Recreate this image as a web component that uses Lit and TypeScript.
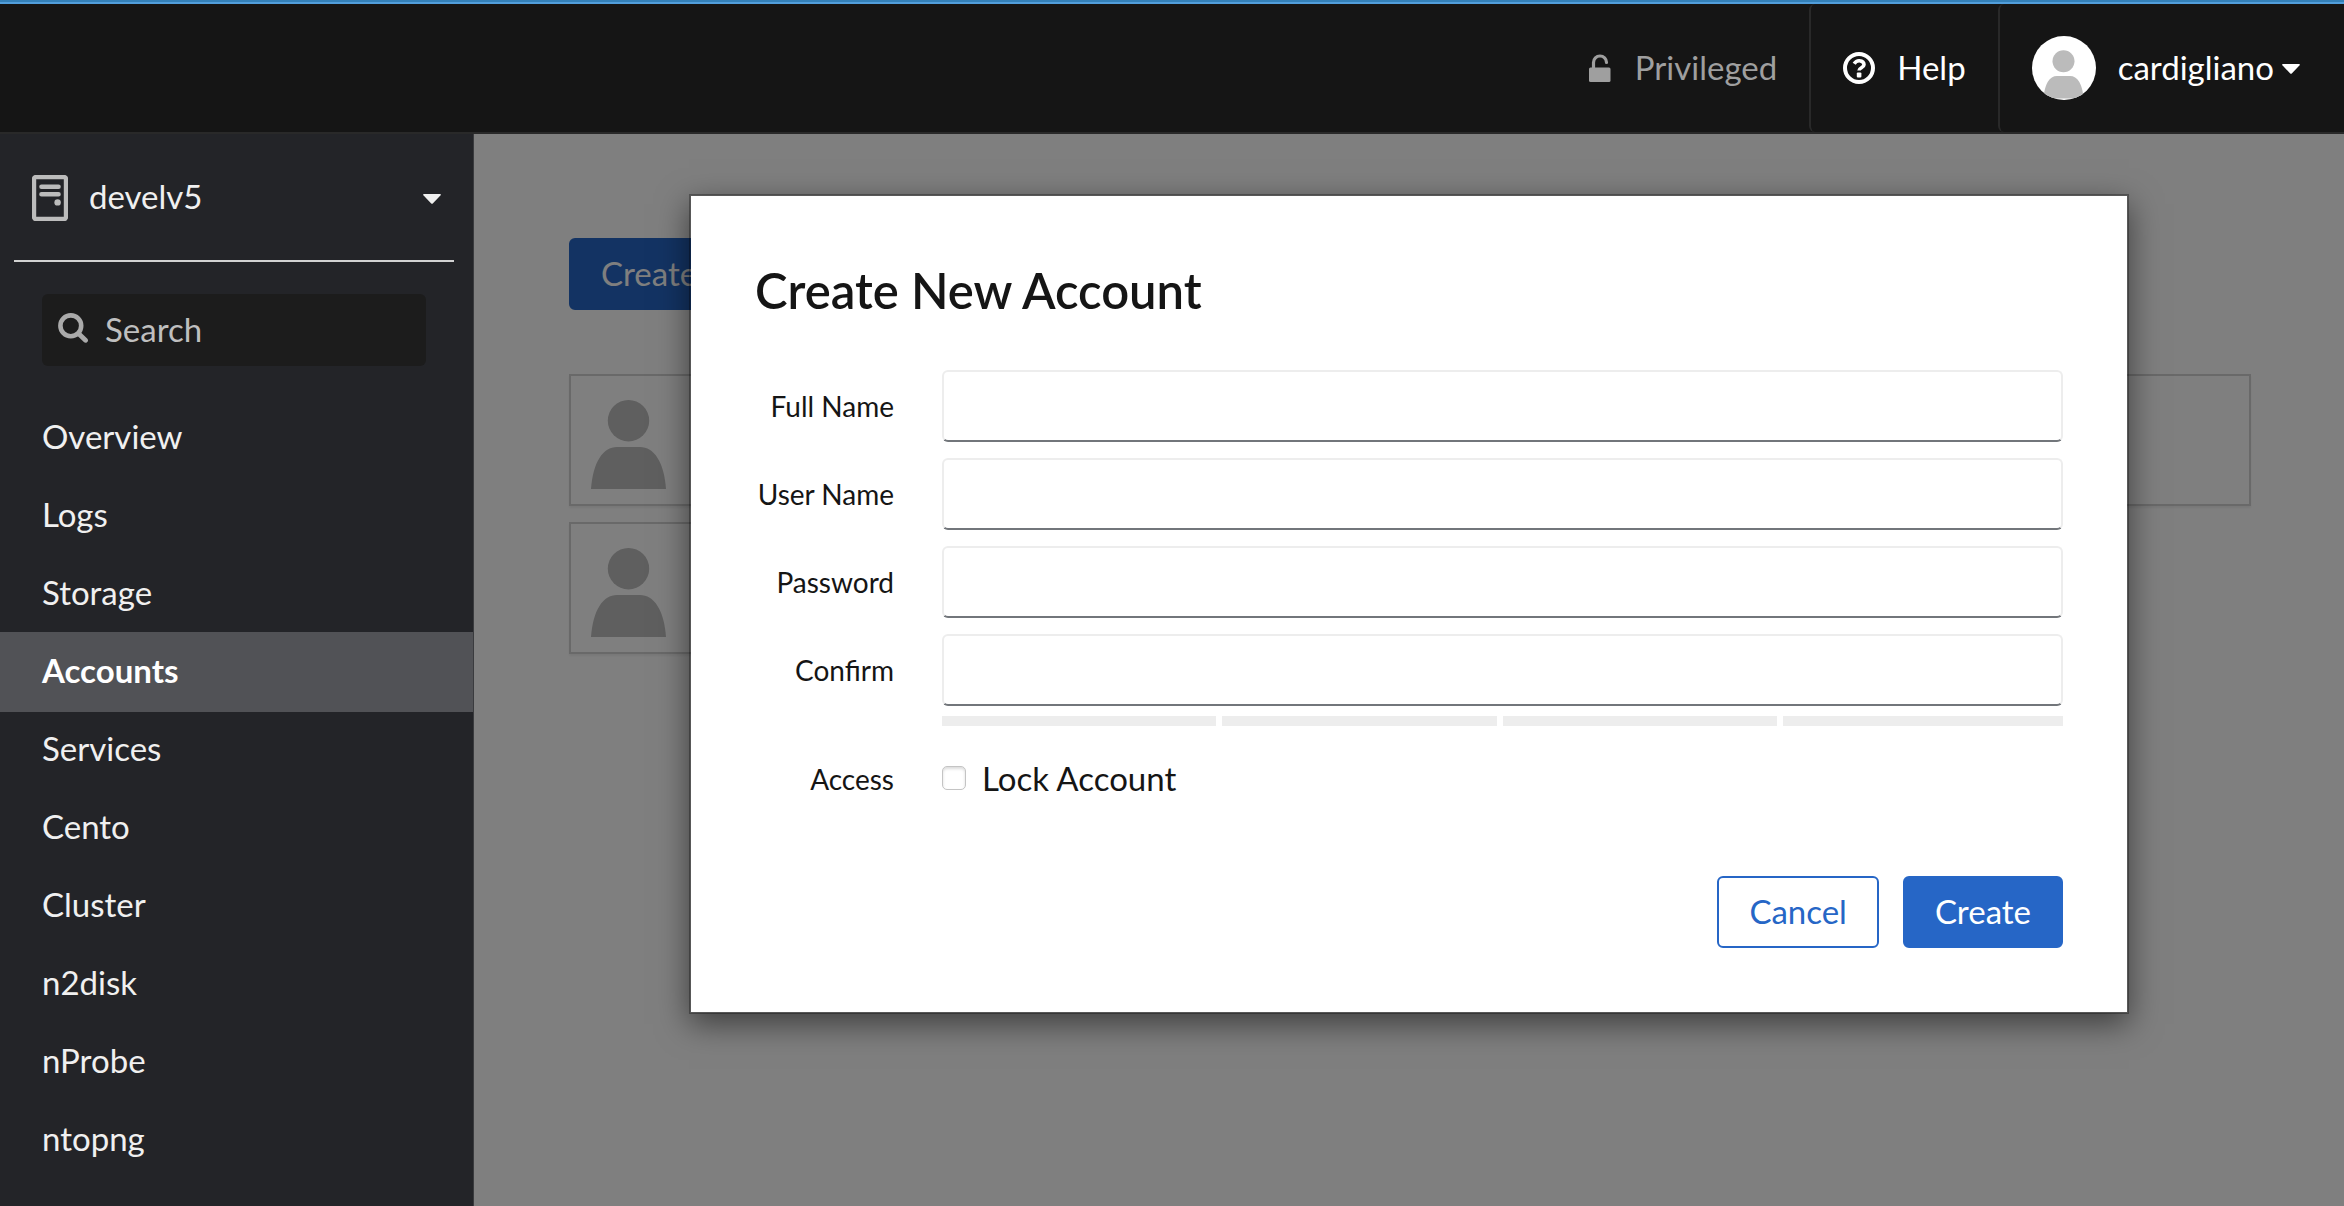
import { LitElement, html, css, svg } from "lit";
import { customElement, state } from "lit/decorators.js";
import { classMap } from "lit/directives/class-map.js";

const NAV_ITEMS = [
  "Overview",
  "Logs",
  "Storage",
  "Accounts",
  "Services",
  "Cento",
  "Cluster",
  "n2disk",
  "nProbe",
  "ntopng",
];

const FIELDS = [
  { id: "full-name", label: "Full Name", type: "text" },
  { id: "user-name", label: "User Name", type: "text" },
  { id: "password", label: "Password", type: "password" },
  { id: "confirm", label: "Confirm", type: "password" },
];

const caret = html`<svg class="caret" viewBox="0 0 18 10" aria-hidden="true">
  <path d="M1 0H17Q18.6 0.4 17.4 1.6L10 9.2Q9 10.4 8 9.2L0.6 1.6Q-0.6 0.4 1 0Z" fill="currentColor" />
</svg>`;

const personShape = svg`<circle cx="37.5" cy="20.7" r="20.7" />
  <path d="M0 89C2 62 12 47 26 47H49C63 47 73 62 75 89Z" />`;

@customElement("app-root")
export class AppRoot extends LitElement {
  static styles = css`
    :host {
      display: block;
      font-family: Lato, "Liberation Sans", sans-serif;
      font-size: 33px;
      line-height: 48px;
      color: #151515;
    }

    * {
      box-sizing: border-box;
    }

    button,
    input {
      font: inherit;
      margin: 0;
    }

    .shell {
      display: grid;
      grid-template-columns: 474px minmax(0, 1fr);
      grid-template-rows: auto 1fr;
      min-height: 100vh;
    }

    .topbar {
      grid-column: 1 / -1;
      display: flex;
      justify-content: flex-end;
      background: #151515;
      border-top: 2px solid #3480b8;
      border-bottom: 2px solid #292929;
      box-shadow: inset 0 2px #519edb;
      padding-top: 2px;
    }

    .tool {
      display: flex;
      align-items: center;
      gap: 22px;
      height: 128px;
      padding: 0 32px;
      border: 0;
      background: none;
      color: #fff;
    }

    .tool + .tool {
      border-left: 2px solid #292929;
      border-radius: 6px;
    }

    .tool span {
      padding-bottom: 2px;
    }

    .tool.muted {
      color: #9f9f9f;
    }

    .tool.account {
      padding-right: 44px;
    }

    .lock {
      width: 22px;
      height: 28px;
      margin-right: 2px;
    }

    .help {
      width: 32px;
      height: 32px;
    }

    .avatar {
      width: 64px;
      height: 64px;
    }

    .user {
      display: flex;
      align-items: center;
      gap: 8px;
    }

    .caret {
      width: 18px;
      height: 10px;
      margin-top: 4px;
    }

    .sidebar {
      background: #232428;
      border-right: 1px solid #3a3b3e;
      color: #f0f0f0;
    }

    .host {
      display: flex;
      align-items: center;
      width: calc(100% - 33px);
      height: 128px;
      margin: 0 19px 0 14px;
      padding: 0 13px 0 18px;
      border: 0;
      border-bottom: 2px solid #d2d2d2;
      background: none;
      color: inherit;
      text-align: left;
    }

    .host-name {
      flex: 1;
      padding-left: 21px;
      padding-bottom: 2px;
    }

    .server {
      width: 36px;
      height: 46px;
      margin-top: 2px;
    }

    .search {
      display: flex;
      align-items: center;
      gap: 17px;
      height: 72px;
      margin: 32px 47px 32px 42px;
      padding: 0 16px 2px;
      border-radius: 6px;
      background: #1c1c1c;
      color: #aaa;
    }

    .search svg {
      flex: none;
      width: 30px;
      height: 30px;
      margin-bottom: 2px;
    }

    .search input {
      flex: 1;
      min-width: 0;
      padding: 0;
      border: 0;
      outline: 0;
      background: none;
      color: #f0f0f0;
    }

    .search input::placeholder {
      color: #bfbfbf;
      opacity: 1;
    }

    .nav {
      display: flex;
      flex-direction: column;
      margin: 0;
      padding: 0;
      list-style: none;
    }

    .nav a {
      display: block;
      padding: 14px 42px 16px;
      color: inherit;
      text-decoration: none;
    }

    .nav a.active {
      margin-bottom: -2px;
      padding-bottom: 18px;
      background: #515256;
      color: #fff;
      font-weight: 700;
    }

    .main {
      position: relative;
      padding: 104px 93px 60px 95px;
      background: #fff;
    }

    .btn {
      height: 72px;
      padding: 0 30px 2px;
      border: 2px solid #2666c6;
      border-radius: 6px;
      background: #2666c6;
      color: #fff;
    }

    .btn.secondary {
      background: #fff;
      color: #2666c6;
    }

    .cards {
      display: grid;
      grid-template-columns: 1fr 1fr;
      gap: 16px;
      margin-top: 64px;
    }

    .card {
      height: 132px;
      padding: 24px 20px;
      border: 2px solid #d2d2d2;
      box-shadow: 0 2px 2px rgba(0, 0, 0, 0.06);
    }

    .card svg {
      display: block;
      width: 75px;
      height: 89px;
      fill: #bebebe;
    }

    .backdrop {
      position: absolute;
      inset: 0;
      display: flex;
      justify-content: center;
      align-items: flex-start;
      padding-top: 60px;
      background: rgba(0, 0, 0, 0.5);
    }

    .modal {
      width: 90%;
      max-width: 1440px;
      padding: 64px;
      border: 2px solid rgba(0, 0, 0, 0.3);
      background: #fff;
      background-clip: padding-box;
      box-shadow: 0 10px 30px rgba(0, 0, 0, 0.5);
    }

    .modal h1 {
      margin: 0 0 50px;
      font-size: 49px;
      font-weight: 600;
      line-height: 60px;
    }

    .form {
      display: grid;
      grid-template-columns: 139px minmax(0, 1fr);
      align-items: center;
      gap: 16px 48px;
    }

    .form-label {
      font-size: 28px;
      text-align: right;
    }

    .field {
      width: 100%;
      height: 72px;
      padding: 0 16px;
      border: 2px solid #ededed;
      border-bottom-color: #72767b;
      border-radius: 6px;
      background: #fff;
    }

    .strength {
      grid-column: 2;
      display: grid;
      grid-template-columns: repeat(4, 1fr);
      margin: -6px 0 12px;
    }

    .strength span {
      height: 10px;
      margin-right: 6px;
      background: #ededed;
    }

    .strength span:last-child {
      margin-right: 0;
    }

    .check {
      display: flex;
      align-items: center;
      gap: 16px;
      padding-bottom: 2px;
    }

    .check input {
      appearance: none;
      width: 24px;
      height: 24px;
      border: 1px solid #c4c4c4;
      border-radius: 5px;
      background: #fff;
      box-shadow: inset 0 2px 3px rgba(0, 0, 0, 0.14);
    }

    .check input:checked {
      background: #2666c6;
    }

    .actions {
      display: flex;
      justify-content: flex-end;
      gap: 24px;
      margin-top: 72px;
    }
  `;

  @state() private active = "Accounts";

  private select(event: Event, item: string) {
    event.preventDefault();
    this.active = item;
  }

  private renderTopbar() {
    return html`<header class="topbar">
      <button class="tool muted" type="button">
        <svg class="lock" viewBox="0 0 22 28" aria-hidden="true">
          <path d="M4.5 14V8.5A6.5 6.5 0 0 1 17.5 8.5" fill="none" stroke="currentColor" stroke-width="3.2" stroke-linecap="round" />
          <rect y="13.5" width="21.5" height="14.5" rx="1.5" fill="currentColor" />
        </svg>
        <span>Privileged</span>
      </button>
      <button class="tool" type="button">
        <svg class="help" viewBox="0 0 32 32" fill="none" aria-hidden="true">
          <circle cx="16" cy="16" r="14" stroke="currentColor" stroke-width="4" />
          <path d="M11.2 11.8C12.6 9.5 14.2 8.6 16.5 8.8C19.2 9 21 10.6 21 12.8C21 15.8 16 15.8 16 18.6" stroke="currentColor" stroke-width="3.6" />
          <rect x="13.8" y="20.6" width="4.6" height="4.8" rx="1" fill="currentColor" />
        </svg>
        <span>Help</span>
      </button>
      <button class="tool account" type="button">
        <svg class="avatar" viewBox="0 0 64 64" aria-hidden="true">
          <defs><clipPath id="round"><circle cx="32" cy="32" r="32" /></clipPath></defs>
          <g clip-path="url(#round)">
            <rect width="64" height="64" fill="#fff" />
            <circle cx="31.5" cy="25.3" r="11" fill="#bbb" />
            <path d="M11.5 62.5C12.5 48 17.5 40 25 40H38C45.5 40 50.5 48 51.5 62.5Z" fill="#bbb" />
          </g>
        </svg>
        <span class="user">cardigliano ${caret}</span>
      </button>
    </header>`;
  }

  private renderSidebar() {
    return html`<aside class="sidebar">
      <button class="host" type="button">
        <svg class="server" viewBox="0 0 36 46" aria-hidden="true">
          <rect x="2" y="2" width="32" height="42" rx="2" fill="none" stroke="#bcbcbc" stroke-width="4.4" />
          <path d="M9.5 11.8H26.5M9.5 19.2H26.5" stroke="#bcbcbc" stroke-width="4.6" stroke-linecap="round" />
          <circle cx="25.6" cy="27.4" r="3.2" fill="#bcbcbc" />
        </svg>
        <span class="host-name">develv5</span>
        ${caret}
      </button>
      <label class="search">
        <svg viewBox="0 0 30 30" fill="none" stroke="currentColor" aria-hidden="true">
          <circle cx="12.8" cy="12.8" r="10.4" stroke-width="4.6" />
          <path d="M21 21L27.5 27.3" stroke-width="4.8" stroke-linecap="round" />
        </svg>
        <input type="search" placeholder="Search" aria-label="Search" />
      </label>
      <nav>
        <ul class="nav">
          ${NAV_ITEMS.map(
            (item) => html`<li>
              <a
                href="#${item.toLowerCase()}"
                class=${classMap({ active: item === this.active })}
                @click=${(e: Event) => this.select(e, item)}
                >${item}</a
              >
            </li>`,
          )}
        </ul>
      </nav>
    </aside>`;
  }

  private renderDialog() {
    return html`<div class="backdrop">
      <section class="modal" role="dialog" aria-modal="true" aria-labelledby="dialog-title">
        <h1 id="dialog-title">Create New Account</h1>
        <form @submit=${(e: Event) => e.preventDefault()}>
          <div class="form">
            ${FIELDS.map(
              (f) => html`<label class="form-label" for=${f.id}>${f.label}</label>
                <input class="field" id=${f.id} type=${f.type} autocomplete="off" />`,
            )}
            <div class="strength"><span></span><span></span><span></span><span></span></div>
            <span class="form-label">Access</span>
            <label class="check"><input type="checkbox" />Lock Account</label>
          </div>
          <div class="actions">
            <button class="btn secondary" type="button">Cancel</button>
            <button class="btn" type="submit">Create</button>
          </div>
        </form>
      </section>
    </div>`;
  }

  render() {
    return html`<div class="shell">
      ${this.renderTopbar()} ${this.renderSidebar()}
      <main class="main">
        <button class="btn" type="button">Create New Account</button>
        <div class="cards">
          ${[1, 2, 3].map(
            () => html`<div class="card"><svg viewBox="0 0 75 89" aria-hidden="true">${personShape}</svg></div>`,
          )}
        </div>
        ${this.renderDialog()}
      </main>
    </div>`;
  }
}
